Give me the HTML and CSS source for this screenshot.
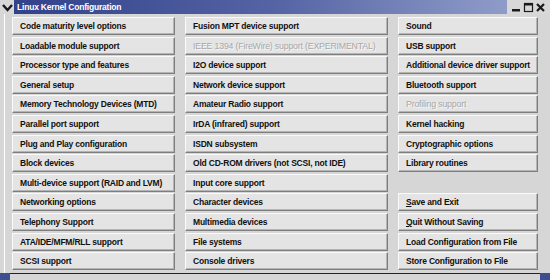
FILE: index.html
```html
<!DOCTYPE html>
<html lang="en">
<head>
<meta charset="UTF-8">
<title>Linux Kernel Configuration</title>
<link rel="stylesheet" href="styles.css">
</head>
<body>
<div class="window">
  <div class="titlebar">
    <div class="menu-btn">
      <svg width="11" height="9" viewBox="0 0 11 9"><path d="M1 2 L5.5 7 L10 2" fill="none" stroke="#1a1a1a" stroke-width="2.4"/></svg>
    </div>
    <div class="title">Linux Kernel Configuration</div>
    <div class="win-btns">
      <svg width="11" height="11" viewBox="0 0 11 11"><rect x="1" y="7" width="8" height="2.5" fill="#1a1a1a"/></svg>
      <svg width="11" height="11" viewBox="0 0 11 11"><rect x="1.5" y="1.5" width="8" height="8" fill="none" stroke="#1a1a1a" stroke-width="1.2"/><rect x="1.5" y="1.5" width="8" height="2" fill="#1a1a1a"/></svg>
      <svg width="11" height="11" viewBox="0 0 11 11"><path d="M2 2 L9 9 M9 2 L2 9" stroke="#1a1a1a" stroke-width="2.2"/></svg>
    </div>
  </div>

  <div class="body">
    <div class="grid">
      <!-- row 1 -->
      <button class="btn">Code maturity level options</button>
      <button class="btn">Fusion MPT device support</button>
      <button class="btn">Sound</button>
      <!-- row 2 -->
      <button class="btn">Loadable module support</button>
      <button class="btn off">IEEE 1394 (FireWire) support (EXPERIMENTAL)</button>
      <button class="btn">USB support</button>
      <!-- row 3 -->
      <button class="btn">Processor type and features</button>
      <button class="btn">I2O device support</button>
      <button class="btn">Additional device driver support</button>
      <!-- row 4 -->
      <button class="btn">General setup</button>
      <button class="btn">Network device support</button>
      <button class="btn">Bluetooth support</button>
      <!-- row 5 -->
      <button class="btn">Memory Technology Devices (MTD)</button>
      <button class="btn">Amateur Radio support</button>
      <button class="btn off">Profiling support</button>
      <!-- row 6 -->
      <button class="btn">Parallel port support</button>
      <button class="btn">IrDA (infrared) support</button>
      <button class="btn">Kernel hacking</button>
      <!-- row 7 -->
      <button class="btn">Plug and Play configuration</button>
      <button class="btn">ISDN subsystem</button>
      <button class="btn">Cryptographic options</button>
      <!-- row 8 -->
      <button class="btn">Block devices</button>
      <button class="btn">Old CD-ROM drivers (not SCSI, not IDE)</button>
      <button class="btn">Library routines</button>
      <!-- row 9 -->
      <button class="btn">Multi-device support (RAID and LVM)</button>
      <button class="btn">Input core support</button>
      <div class="empty"></div>
      <!-- row 10 -->
      <button class="btn">Networking options</button>
      <button class="btn">Character devices</button>
      <button class="btn"><u>S</u>ave and Exit</button>
      <!-- row 11 -->
      <button class="btn">Telephony Support</button>
      <button class="btn">Multimedia devices</button>
      <button class="btn"><u>Q</u>uit Without Saving</button>
      <!-- row 12 -->
      <button class="btn">ATA/IDE/MFM/RLL support</button>
      <button class="btn">File systems</button>
      <button class="btn">Load Configuration from File</button>
      <!-- row 13 -->
      <button class="btn">SCSI support</button>
      <button class="btn">Console drivers</button>
      <button class="btn">Store Configuration to File</button>
    </div>
  </div>
  <div class="corner left"></div>
  <div class="corner right"></div>
</div>
</body>
</html>
```

FILE: styles.css
```css
body {
margin: 0;
background: #3d4f8f;
font-family: 'Liberation Sans', Arial, sans-serif;
}

.window {
width: 550px;
height: 280px;
background: #d6d6d6;
position: relative;
overflow: hidden;
}

.titlebar {
height: 14px;
display: flex;
align-items: center;
background: linear-gradient(to right, #30408a 0%, #5464a4 50%, #9aa6d0 100%);
}

.menu-btn {
width: 14px;
height: 14px;
background: #d8d8d8;
display: flex;
align-items: center;
justify-content: center;
}

.title {
flex: 1;
color: #fff;
font-weight: bold;
font-size: 8.5px;
letter-spacing: -0.2px;
padding-left: 3px;
}

.win-btns {
display: flex;
gap: 1px;
height: 14px;
align-items: center;
padding: 0 4px 0 4px;
background: #d8d8d8;
}

.body {
height: 260px;
border-left: 4px solid #d6d6d6;
border-bottom: 1px solid #222;
box-sizing: border-box;
box-shadow: inset 1px 0 0 #fff;
}

.grid {
display: grid;
grid-template-columns: 163px 203px 140px;
grid-template-rows: repeat(13, 18px);
column-gap: 10px;
row-gap: 1.6px;
padding: 3px 0 0 8px;
}

.btn {
margin: 0;
padding: 0 0 0 7px;
text-align: left;
font-family: 'Liberation Sans', Arial, sans-serif;
font-size: 8.5px;
letter-spacing: -0.2px;
font-weight: bold;
color: #111;
background: #e4e4e4;
border: 1px solid;
border-color: #fafafa #7e7e7e #7e7e7e #fafafa;
box-shadow: inset -1px -1px 0 #b4b4b4;
white-space: nowrap;
overflow: hidden;
}

.btn u {
text-decoration-thickness: 1px;
text-underline-offset: 1px;
}

.btn.off {
color: #a8a8a8;
font-weight: normal;
font-size: 8.8px;
text-shadow: 1px 1px 0 #f6f6f6;
}

.corner {
position: absolute;
bottom: 0;
width: 10px;
height: 7px;
background: #3d4f8f;
}

.corner.left { left: 0; }
.corner.right { right: 0; }
```
